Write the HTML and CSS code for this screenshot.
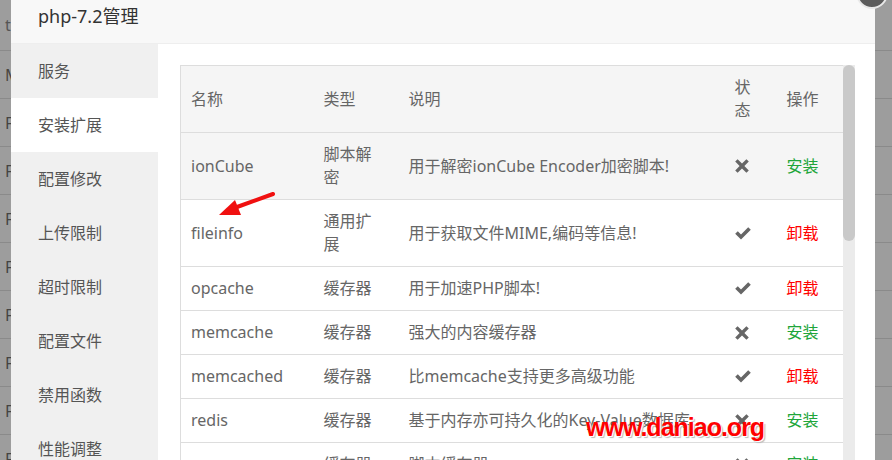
FILE: index.html
```html
<!DOCTYPE html>
<html lang="zh-CN">
<head>
<meta charset="utf-8">
<title>php-7.2管理</title>
<link rel="stylesheet" href="styles.css">
</head>
<body>
  <div class="backdrop-col backdrop-left">
    <div class="bg-row first">t</div>
    <div class="bg-row accent">M</div>
    <div class="bg-row">F</div>
    <div class="bg-row">F</div>
    <div class="bg-row">F</div>
    <div class="bg-row">F</div>
    <div class="bg-row">F</div>
    <div class="bg-row">F</div>
    <div class="bg-row">F</div>
    <div class="bg-row">F</div>
  </div>

  <div class="layer">
    <div class="layer-title">php-7.2管理</div>
    <div class="layer-body">
      <ul class="side-menu">
        <li>服务</li>
        <li class="active">安装扩展</li>
        <li>配置修改</li>
        <li>上传限制</li>
        <li>超时限制</li>
        <li>配置文件</li>
        <li>禁用函数</li>
        <li>性能调整</li>
        <li>日志</li>
      </ul>
      <div class="content">
        <div class="table-area">
          <div class="table-clip">
            <table class="ext-table">
              <colgroup>
                <col class="c-name"><col class="c-type"><col class="c-desc"><col class="c-status"><col class="c-op">
              </colgroup>
              <thead>
                <tr><th>名称</th><th>类型</th><th>说明</th><th>状态</th><th>操作</th></tr>
              </thead>
              <tbody>
                <tr class="hover"><td>ionCube</td><td>脚本解密</td><td>用于解密ionCube Encoder加密脚本!</td><td><svg class="ico" viewBox="0 0 14 14"><path d="M2.6 0.2 7 4.6 11.4 0.2 13.8 2.6 9.4 7 13.8 11.4 11.4 13.8 7 9.4 2.6 13.8 0.2 11.4 4.6 7 0.2 2.6Z"/></svg></td><td><a class="op install">安装</a></td></tr>
                <tr><td>fileinfo</td><td>通用扩展</td><td>用于获取文件MIME,编码等信息!</td><td><svg class="ico chk" viewBox="0 0 16 13"><path d="M0.2 6.8 2.8 4.2 6 7.4 13.2 0.2 15.8 2.8 6 12.6Z"/></svg></td><td><a class="op remove">卸载</a></td></tr>
                <tr><td>opcache</td><td>缓存器</td><td>用于加速PHP脚本!</td><td><svg class="ico chk" viewBox="0 0 16 13"><path d="M0.2 6.8 2.8 4.2 6 7.4 13.2 0.2 15.8 2.8 6 12.6Z"/></svg></td><td><a class="op remove">卸载</a></td></tr>
                <tr><td>memcache</td><td>缓存器</td><td>强大的内容缓存器</td><td><svg class="ico" viewBox="0 0 14 14"><path d="M2.6 0.2 7 4.6 11.4 0.2 13.8 2.6 9.4 7 13.8 11.4 11.4 13.8 7 9.4 2.6 13.8 0.2 11.4 4.6 7 0.2 2.6Z"/></svg></td><td><a class="op install">安装</a></td></tr>
                <tr><td>memcached</td><td>缓存器</td><td>比memcache支持更多高级功能</td><td><svg class="ico chk" viewBox="0 0 16 13"><path d="M0.2 6.8 2.8 4.2 6 7.4 13.2 0.2 15.8 2.8 6 12.6Z"/></svg></td><td><a class="op remove">卸载</a></td></tr>
                <tr><td>redis</td><td>缓存器</td><td>基于内存亦可持久化的Key-Value数据库</td><td><svg class="ico" viewBox="0 0 14 14"><path d="M2.6 0.2 7 4.6 11.4 0.2 13.8 2.6 9.4 7 13.8 11.4 11.4 13.8 7 9.4 2.6 13.8 0.2 11.4 4.6 7 0.2 2.6Z"/></svg></td><td><a class="op install">安装</a></td></tr>
                <tr><td>apcu</td><td>缓存器</td><td>脚本缓存器</td><td><svg class="ico" viewBox="0 0 14 14"><path d="M2.6 0.2 7 4.6 11.4 0.2 13.8 2.6 9.4 7 13.8 11.4 11.4 13.8 7 9.4 2.6 13.8 0.2 11.4 4.6 7 0.2 2.6Z"/></svg></td><td><a class="op install">安装</a></td></tr>
                <tr><td>imagemagick</td><td>通用扩展</td><td>Imagick高性能图形库</td><td><svg class="ico" viewBox="0 0 14 14"><path d="M2.6 0.2 7 4.6 11.4 0.2 13.8 2.6 9.4 7 13.8 11.4 11.4 13.8 7 9.4 2.6 13.8 0.2 11.4 4.6 7 0.2 2.6Z"/></svg></td><td><a class="op install">安装</a></td></tr>
              </tbody>
            </table>
          </div>
          <div class="scrollbar"><div class="scroll-thumb"></div></div>
        </div>
      </div>
    </div>
  </div>

  <div class="backdrop-col backdrop-right"></div>

  <a class="layer-close" title="关闭"></a>

  <svg class="arrow" viewBox="0 0 62 32" width="62" height="32">
    <line x1="21" y1="19" x2="57" y2="6" stroke="#f01010" stroke-width="4" stroke-linecap="round"/>
    <polygon points="3,27 19,12 25,27" fill="#f01010"/>
  </svg>

  <div class="watermark">www.daniao.org</div>
</body>
</html>
```

FILE: styles.css
```css
* { box-sizing: border-box; }

html, body {
  margin: 0;
  padding: 0;
}

body {
  width: 892px;
  height: 460px;
  overflow: hidden;
  display: flex;
  position: relative;
  font-family: "Noto Sans", "Noto Sans CJK SC", sans-serif;
  background-color: #9d9d9d;
  background-image: repeating-linear-gradient(to bottom, transparent 0, transparent 47px, #8a8a8a 47px, #8a8a8a 48px);
  background-position: 0 3px;
}

/* dimmed page behind the dialog */
.backdrop-col {
  flex: none;
  overflow: hidden;
}
.backdrop-left { width: 11px; }
.backdrop-right { width: 17px; }

.bg-row {
  height: 48px;
  line-height: 48px;
  padding-left: 5px;
  font-size: 16px;
  color: #444;
  white-space: nowrap;
}
.bg-row.first { height: 51px; line-height: 51px; color: #555; }
.bg-row.accent { color: #4a4540; }

/* dialog */
.layer {
  width: 864px;
  flex: none;
  background: #fff;
  display: flex;
  flex-direction: column;
}

.layer-title {
  height: 44px;
  padding-left: 27px;
  line-height: 33px;
  font-size: 18px;
  color: #333;
  background: #f8f8f8;
  border-bottom: 1px solid #eee;
}

.layer-body {
  flex: 1;
  min-height: 0;
  display: flex;
}

.side-menu {
  width: 147px;
  flex: none;
  margin: 0;
  padding: 0;
  list-style: none;
  background: #f0f0f0;
}
.side-menu li {
  height: 54px;
  line-height: 54px;
  padding-left: 27px;
  font-size: 16px;
  color: #555;
}
.side-menu li.active { background: #fff; }

.content {
  flex: 1;
  min-width: 0;
  padding: 21px 20px 0 22px;
}

.table-area {
  height: 395px;
  display: flex;
}
.table-clip {
  width: 663px;
  flex: none;
  overflow: hidden;
}
.scrollbar {
  width: 12px;
  flex: none;
  background: #ebebeb;
}
.scroll-thumb {
  height: 176px;
  background: #c9c9c9;
  border-radius: 6px;
}

.ext-table {
  width: 663px;
  table-layout: fixed;
  border-collapse: collapse;
  border: 1px solid #ddd;
  font-size: 16px;
  line-height: 23px;
  color: #666;
}
.c-name { width: 132px; }
.c-type { width: 85px; }
.c-desc { width: 326px; }
.c-status { width: 52px; }
.c-op { width: 68px; }

.ext-table th,
.ext-table td {
  padding: 10px 13px 10px 11px;
  text-align: left;
  vertical-align: middle;
  font-weight: normal;
  border-bottom: 1px solid #ddd;
}
.ext-table th:first-child,
.ext-table td:first-child { padding-left: 10px; }

.ext-table thead tr { background: #f5f5f5; }
.ext-table tr.hover { background: #f5f5f5; }

.ico {
  display: block;
  width: 14px;
  height: 14px;
  fill: #666;
}
.ico.chk { width: 16px; height: 13px; }

.op { cursor: pointer; }
.op.install { color: #20a53a; }
.op.remove { color: #ff0000; }

/* overlays */
.layer-close {
  position: absolute;
  left: 856px;
  top: -23px;
  width: 32px;
  height: 32px;
  border-radius: 50%;
  background: #5c5c5c;
  border: 2px solid #e8e8e8;
}

.arrow {
  position: absolute;
  left: 216px;
  top: 188px;
}

.watermark {
  position: absolute;
  left: 586px;
  top: 413px;
  font-family: "Liberation Sans", Arial, sans-serif;
  font-weight: bold;
  font-size: 25px;
  line-height: 28px;
  letter-spacing: -1px;
  color: #ff0000;
  text-shadow: 1px 1px 0 #fff, 2px 2px 1px #bbb;
}
```
